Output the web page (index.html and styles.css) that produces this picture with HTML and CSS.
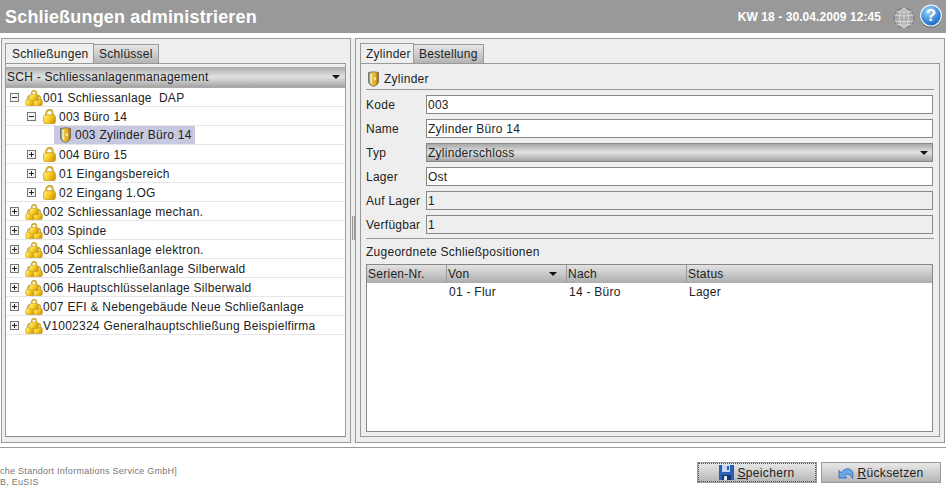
FILE: index.html
```html
<!DOCTYPE html>
<html lang="de">
<head>
<meta charset="utf-8">
<title>Schließungen administrieren</title>
<link rel="stylesheet" href="styles.css">
</head>
<body>
<svg class="defs" width="0" height="0" aria-hidden="true">
  <defs>
    <linearGradient id="gold" x1="0" y1="0" x2="1" y2="0.5">
      <stop offset="0" stop-color="#fff590"/><stop offset="0.5" stop-color="#fbd32a"/><stop offset="1" stop-color="#d79a0c"/>
    </linearGradient>
    <linearGradient id="cyl" x1="0" y1="0" x2="1" y2="0">
      <stop offset="0" stop-color="#8a8a70"/><stop offset="0.35" stop-color="#e0c850"/><stop offset="0.7" stop-color="#f0a818"/><stop offset="1" stop-color="#8a6a20"/>
    </linearGradient>
    <radialGradient id="ball" cx="0.4" cy="0.3" r="0.8">
      <stop offset="0" stop-color="#a8d8fa"/><stop offset="0.55" stop-color="#3f8fdc"/><stop offset="1" stop-color="#1c5cb0"/>
    </radialGradient>
    <symbol id="lock" viewBox="0 0 13 15">
      <path d="M3.300 7V4.200a3.200 3.200 0 0 1 6.400 0V7" fill="none" stroke="#b8921e" stroke-width="1.800"/>
      <path d="M3.300 7V4.200a3.200 3.200 0 0 1 6.400 0V7" fill="none" stroke="#efd25a" stroke-width=".7"/>
      <rect x=".6" y="5.800" width="11.800" height="9" rx="2.400" fill="url(#gold)" stroke="#b98c12" stroke-width=".7"/>
    </symbol>
    <symbol id="cylinder" viewBox="0 0 13 16">
      <path d="M1.500 1.500Q6.500 0 11.500 1.500V11Q11 14 6.500 15.500Q2 14 1.500 11Z" fill="url(#cyl)" stroke="#6d6a50" stroke-width=".8"/>
      <path d="M3 3V11Q3.500 13 5 13.700V2.400Z" fill="#dfe6d0"/>
      <rect x="7" y="6.500" width="2" height="2.200" fill="#fff3b0"/>
    </symbol>
    <symbol id="group" viewBox="0 0 18 16">
      <use href="#lock" x="0" y="5" width="10" height="11"/>
      <use href="#lock" x="8" y="5" width="10" height="11"/>
      <use href="#lock" x="4" y="0" width="10" height="11"/>
    </symbol>
  </defs>
</svg>

<header class="topbar">
  <h1 class="title">Schließungen administrieren</h1>
  <div class="topbar-right">
    <span class="clock">KW 18 - 30.04.2009 12:45</span>
    <svg class="globe" width="22" height="22" viewBox="0 0 22 22">
      <circle cx="11" cy="11" r="10" fill="#a9a9a9" stroke="#777"/>
      <g fill="none" stroke="#dedede" stroke-width=".9">
        <ellipse cx="11" cy="11" rx="4.500" ry="10"/>
        <path d="M11 1v20M1.500 8q9.500 2 19 0M1.500 14q9.500 2 19 0M3.500 4.500q7.500 1.500 15 0M3.500 17.500q7.500 1.500 15 0"/>
      </g>
    </svg>
    <svg class="help" width="24" height="24" viewBox="0 0 24 24">
      <circle cx="12" cy="12.600" r="11" fill="#666"/>
      <circle cx="12" cy="11.600" r="10.400" fill="url(#ball)" stroke="#e8f2fb" stroke-width="1.200"/>
      <text x="12" y="17.200" class="help-mark">?</text>
    </svg>
  </div>
</header>

<main class="workspace">
  <section class="panel panel-left">
    <nav class="tabs">
      <span class="tab tab-active tab-wide">Schließungen</span>
      <span class="tab">Schlüssel</span>
    </nav>
    <div class="pane pane-left">
      <div class="combo combo-tree"><span>SCH - Schliessanlagenmanagement</span><i class="arrow"></i></div>
      <ul class="tree">
        <li class="row"><i class="toggle minus"></i><svg class="ico-group" width="18" height="16"><use href="#group"/></svg><span>001 Schliessanlage&nbsp; DAP</span></li>
        <li class="row lvl2"><i class="toggle minus"></i><svg class="ico-lock" width="13" height="15"><use href="#lock"/></svg><span>003 Büro 14</span></li>
        <li class="row lvl3"><span class="selected"><svg class="ico-cyl" width="13" height="16"><use href="#cylinder"/></svg><span>003 Zylinder Büro 14</span></span></li>
        <li class="row lvl2"><i class="toggle plus"></i><svg class="ico-lock" width="13" height="15"><use href="#lock"/></svg><span>004 Büro 15</span></li>
        <li class="row lvl2"><i class="toggle plus"></i><svg class="ico-lock" width="13" height="15"><use href="#lock"/></svg><span>01 Eingangsbereich</span></li>
        <li class="row lvl2"><i class="toggle plus"></i><svg class="ico-lock" width="13" height="15"><use href="#lock"/></svg><span>02 Eingang 1.OG</span></li>
        <li class="row"><i class="toggle plus"></i><svg class="ico-group" width="18" height="16"><use href="#group"/></svg><span>002 Schliessanlage mechan.</span></li>
        <li class="row"><i class="toggle plus"></i><svg class="ico-group" width="18" height="16"><use href="#group"/></svg><span>003 Spinde</span></li>
        <li class="row"><i class="toggle plus"></i><svg class="ico-group" width="18" height="16"><use href="#group"/></svg><span>004 Schliessanlage elektron.</span></li>
        <li class="row"><i class="toggle plus"></i><svg class="ico-group" width="18" height="16"><use href="#group"/></svg><span>005 Zentralschließanlage Silberwald</span></li>
        <li class="row"><i class="toggle plus"></i><svg class="ico-group" width="18" height="16"><use href="#group"/></svg><span>006 Hauptschlüsselanlage Silberwald</span></li>
        <li class="row"><i class="toggle plus"></i><svg class="ico-group" width="18" height="16"><use href="#group"/></svg><span>007 EFI &amp; Nebengebäude Neue Schließanlage</span></li>
        <li class="row"><i class="toggle plus"></i><svg class="ico-group" width="18" height="16"><use href="#group"/></svg><span>V1002324 Generalhauptschließung Beispielfirma</span></li>
      </ul>
    </div>
  </section>

  <div class="splitter"><i class="grip"></i></div>

  <section class="panel panel-right">
    <nav class="tabs">
      <span class="tab tab-active tab-cyl">Zylinder</span>
      <span class="tab">Bestellung</span>
    </nav>
    <div class="pane pane-right">
      <div class="heading"><svg class="ico-cyl" width="13" height="16"><use href="#cylinder"/></svg><span>Zylinder</span></div>
      <form class="fields">
        <label class="field-label">Kode</label><div class="input">003</div>
        <label class="field-label">Name</label><div class="input">Zylinder Büro 14</div>
        <label class="field-label">Typ</label><div class="combo combo-field"><span>Zylinderschloss</span><i class="arrow"></i></div>
        <label class="field-label">Lager</label><div class="input">Ost</div>
        <label class="field-label">Auf Lager</label><div class="input input-off">1</div>
        <label class="field-label">Verfügbar</label><div class="input input-off">1</div>
      </form>
      <div class="section-label">Zugeordnete Schließpositionen</div>
      <div class="table">
        <div class="thead">
          <span class="th">Serien-Nr.</span>
          <span class="th th-sort">Von<i class="arrow"></i></span>
          <span class="th">Nach</span>
          <span class="th">Status</span>
        </div>
        <div class="tr">
          <span class="td"></span>
          <span class="td">01 - Flur</span>
          <span class="td">14 - Büro</span>
          <span class="td">Lager</span>
        </div>
      </div>
    </div>
  </section>
</main>

<footer class="footer">
  <div class="legal">
    <div>che Standort Informations Service GmbH]</div>
    <div>B, EuSIS</div>
  </div>
  <div class="actions">
    <button class="btn btn-focus" type="button">
      <svg width="15" height="15" viewBox="0 0 15 15"><path d="M0 0H15V15H0Z" fill="#2a5fb8"/><rect x="3" y="0" width="8" height="7" fill="#c4d8f0"/><rect x="8" y="1" width="2" height="4" fill="#2a5fb8"/><rect x="3" y="10" width="9" height="5" fill="#14366e"/><rect x="5" y="11" width="3" height="4" fill="#dfe6ef"/></svg>
      <span><u>S</u>peichern</span>
    </button>
    <button class="btn" type="button">
      <svg width="16" height="14" viewBox="0 0 16 14"><path d="M1 12V4.500L3.500 7C6 2 12 1 15 6.500L14.500 12.500C12.500 7.500 8.500 7.500 6.500 9.500L9 12Z" fill="#6aa8e6" stroke="#2a66b8" stroke-width=".8"/></svg>
      <span><u>R</u>ücksetzen</span>
    </button>
  </div>
</footer>
</body>
</html>
```
FILE: styles.css
```css
* { box-sizing: border-box; }
html, body { margin: 0; padding: 0; }
body {
  width: 946px;
  height: 488px;
  overflow: hidden;
  display: flex;
  flex-direction: column;
  background: #fff;
  color: #222;
  font: 12px/1 "Liberation Sans", Arial, sans-serif;
  letter-spacing: .26px;
}
.defs { display: block; height: 0; }
ul { list-style: none; margin: 0; padding: 0; }

.topbar {
  height: 33px;
  flex: none;
  background: #999;
  display: flex;
  align-items: center;
  justify-content: space-between;
  padding: 0 3px 0 5px;
}
.title {
  margin: 0;
  color: #fff;
  font-size: 18px;
  font-weight: bold;
  letter-spacing: .18px;
}
.topbar-right { display: flex; align-items: center; }
.clock { color: #fff; font-weight: bold; font-size: 12px; letter-spacing: .08px; margin-right: 12px; }
.globe { margin: 2px 4px 0 0; }
.help { margin-top: -2px; }
.help-mark { fill: #fff; font: bold 17px "Liberation Sans", sans-serif; text-anchor: middle; }

.workspace {
  flex: none;
  height: 405px;
  margin: 5px 1px 0 1px;
  display: flex;
}
.panel {
  background: #eee;
  border: 1px solid #999;
  padding: 4px 4px 5px 3px;
  display: flex;
  flex-direction: column;
}
.panel-left { width: 350px; padding-right: 4px; }
.panel-right { width: 590px; padding-left: 4px; }
.splitter {
  width: 4px;
  flex: none;
  background: #eee;
  display: flex;
  align-items: center;
  justify-content: center;
}
.grip {
  width: 3px;
  height: 24px;
  margin-top: -26px;
  background: repeating-linear-gradient(90deg, #999 0 1px, #ddd 1px 2px);
}

.tabs { display: flex; height: 20px; align-items: flex-end; flex: none; }
.tab {
  height: 19px;
  padding: 0 5px;
  display: flex;
  align-items: center;
  border: 1px solid #999;
  border-bottom: 0;
  background: linear-gradient(#e6e6e6, #b4b4b4);
}
.tab-active { height: 20px; background: #eee; }
.tab-wide { width: 89px; padding-left: 6px; }
.tab-cyl { width: 54px; padding-left: 5px; }
.tabs .tab + .tab { border-left: 0; }

.pane {
  flex: 1;
  min-height: 0;
  border: 1px solid #999;
  display: flex;
  flex-direction: column;
}
.pane-left { padding: 3px 0 0; border-bottom-color: #888; }
.pane-right { padding: 4px 5px 4px 5px; }

.combo {
  display: flex;
  align-items: center;
  justify-content: space-between;
  background: linear-gradient(#a9a9a9, #dedede 45%, #dcdcdc 55%, #a4a4a4);
}
.combo-tree { height: 21px; padding: 0 5px 0 1px; flex: none; border-bottom: 1px solid #aaa; }
.combo-field { height: 19px; padding: 0 4px 0 2px; border: 1px solid #888; }
.arrow {
  width: 0;
  height: 0;
  border-style: solid;
  border-width: 4px 4px 0;
  border-color: #111 transparent transparent;
}

.tree { flex: 1; background: #fff; }
.row {
  height: 19px;
  display: flex;
  align-items: center;
  padding-left: 4px;
  padding-top: 1px;
  border-bottom: 1px solid #e6e6e6;
}
.lvl2 { padding-left: 21px; }
.lvl3 { padding-left: 48px; padding-top: 0; }
.toggle {
  width: 9px;
  height: 9px;
  flex: none;
  border: 1px solid #777;
  background:
    linear-gradient(#222, #222) center / 5px 1px no-repeat,
    #f4f4f4;
}
.plus {
  background:
    linear-gradient(#222, #222) center / 5px 1px no-repeat,
    linear-gradient(#222, #222) center / 1px 5px no-repeat,
    #f4f4f4;
}
.ico-group { margin: 0 0 0 6px; flex: none; }
.ico-lock { margin: 0 3px 0 7px; flex: none; }
.selected {
  display: flex;
  align-items: center;
  height: 18px;
  padding: 0 3px 0 5px;
  background: #c7c9e1;
}
.selected .ico-cyl { margin-right: 3px; }

.heading {
  height: 22px;
  display: flex;
  align-items: center;
  gap: 4px;
  padding-left: 1px;
  border-bottom: 1px solid #999;
  flex: none;
}
.fields {
  margin-top: 5px;
  display: grid;
  grid-template-columns: 60px 1fr;
  grid-auto-rows: 19px;
  row-gap: 5px;
  padding-bottom: 4px;
  border-bottom: 1px solid #999;
  flex: none;
}
.field-label { display: flex; align-items: center; }
.input {
  border: 1px solid #888;
  background: #fff;
  display: flex;
  align-items: center;
  padding-left: 1px;
  margin-right: 1px;
}
.fields .combo-field { margin-right: 1px; padding-left: 1px; }
.input-off { background: #eee; }

.section-label { height: 25px; display: flex; align-items: center; flex: none; }
.table {
  flex: 1;
  min-height: 0;
  border: 1px solid #888;
  background: #fff;
  margin-right: 1px;
}
.thead, .tr { display: grid; grid-template-columns: 80px 120px 120px 1fr; }
.thead { height: 18px; }
.th {
  display: flex;
  align-items: center;
  justify-content: space-between;
  padding: 0 9px 0 1px;
  border-right: 1px solid #999;
  background: linear-gradient(#e2e2e2, #adadad);
}
.th:last-child { border-right: 0; }
.tr { height: 18px; }
.td { display: flex; align-items: center; padding-left: 2px; }

.footer {
  flex: 1;
  margin-top: 4px;
  border-top: 1px solid #999;
  display: flex;
  justify-content: space-between;
}
.legal {
  margin-top: 18px;
  font-size: 9px;
  line-height: 11px;
  color: #777;
  letter-spacing: .27px;
}
.actions { display: flex; gap: 4px; margin: 14px 5px 0 0; }
.btn {
  width: 120px;
  height: 21px;
  padding: 0;
  border: 1px solid #999;
  background: linear-gradient(#e8e8e8, #b6b6b6);
  display: flex;
  align-items: center;
  justify-content: center;
  gap: 3px;
  color: #222;
  font: inherit;
  letter-spacing: .35px;
}
.btn-focus { outline: 1px dotted #555; outline-offset: -2px; }
```
